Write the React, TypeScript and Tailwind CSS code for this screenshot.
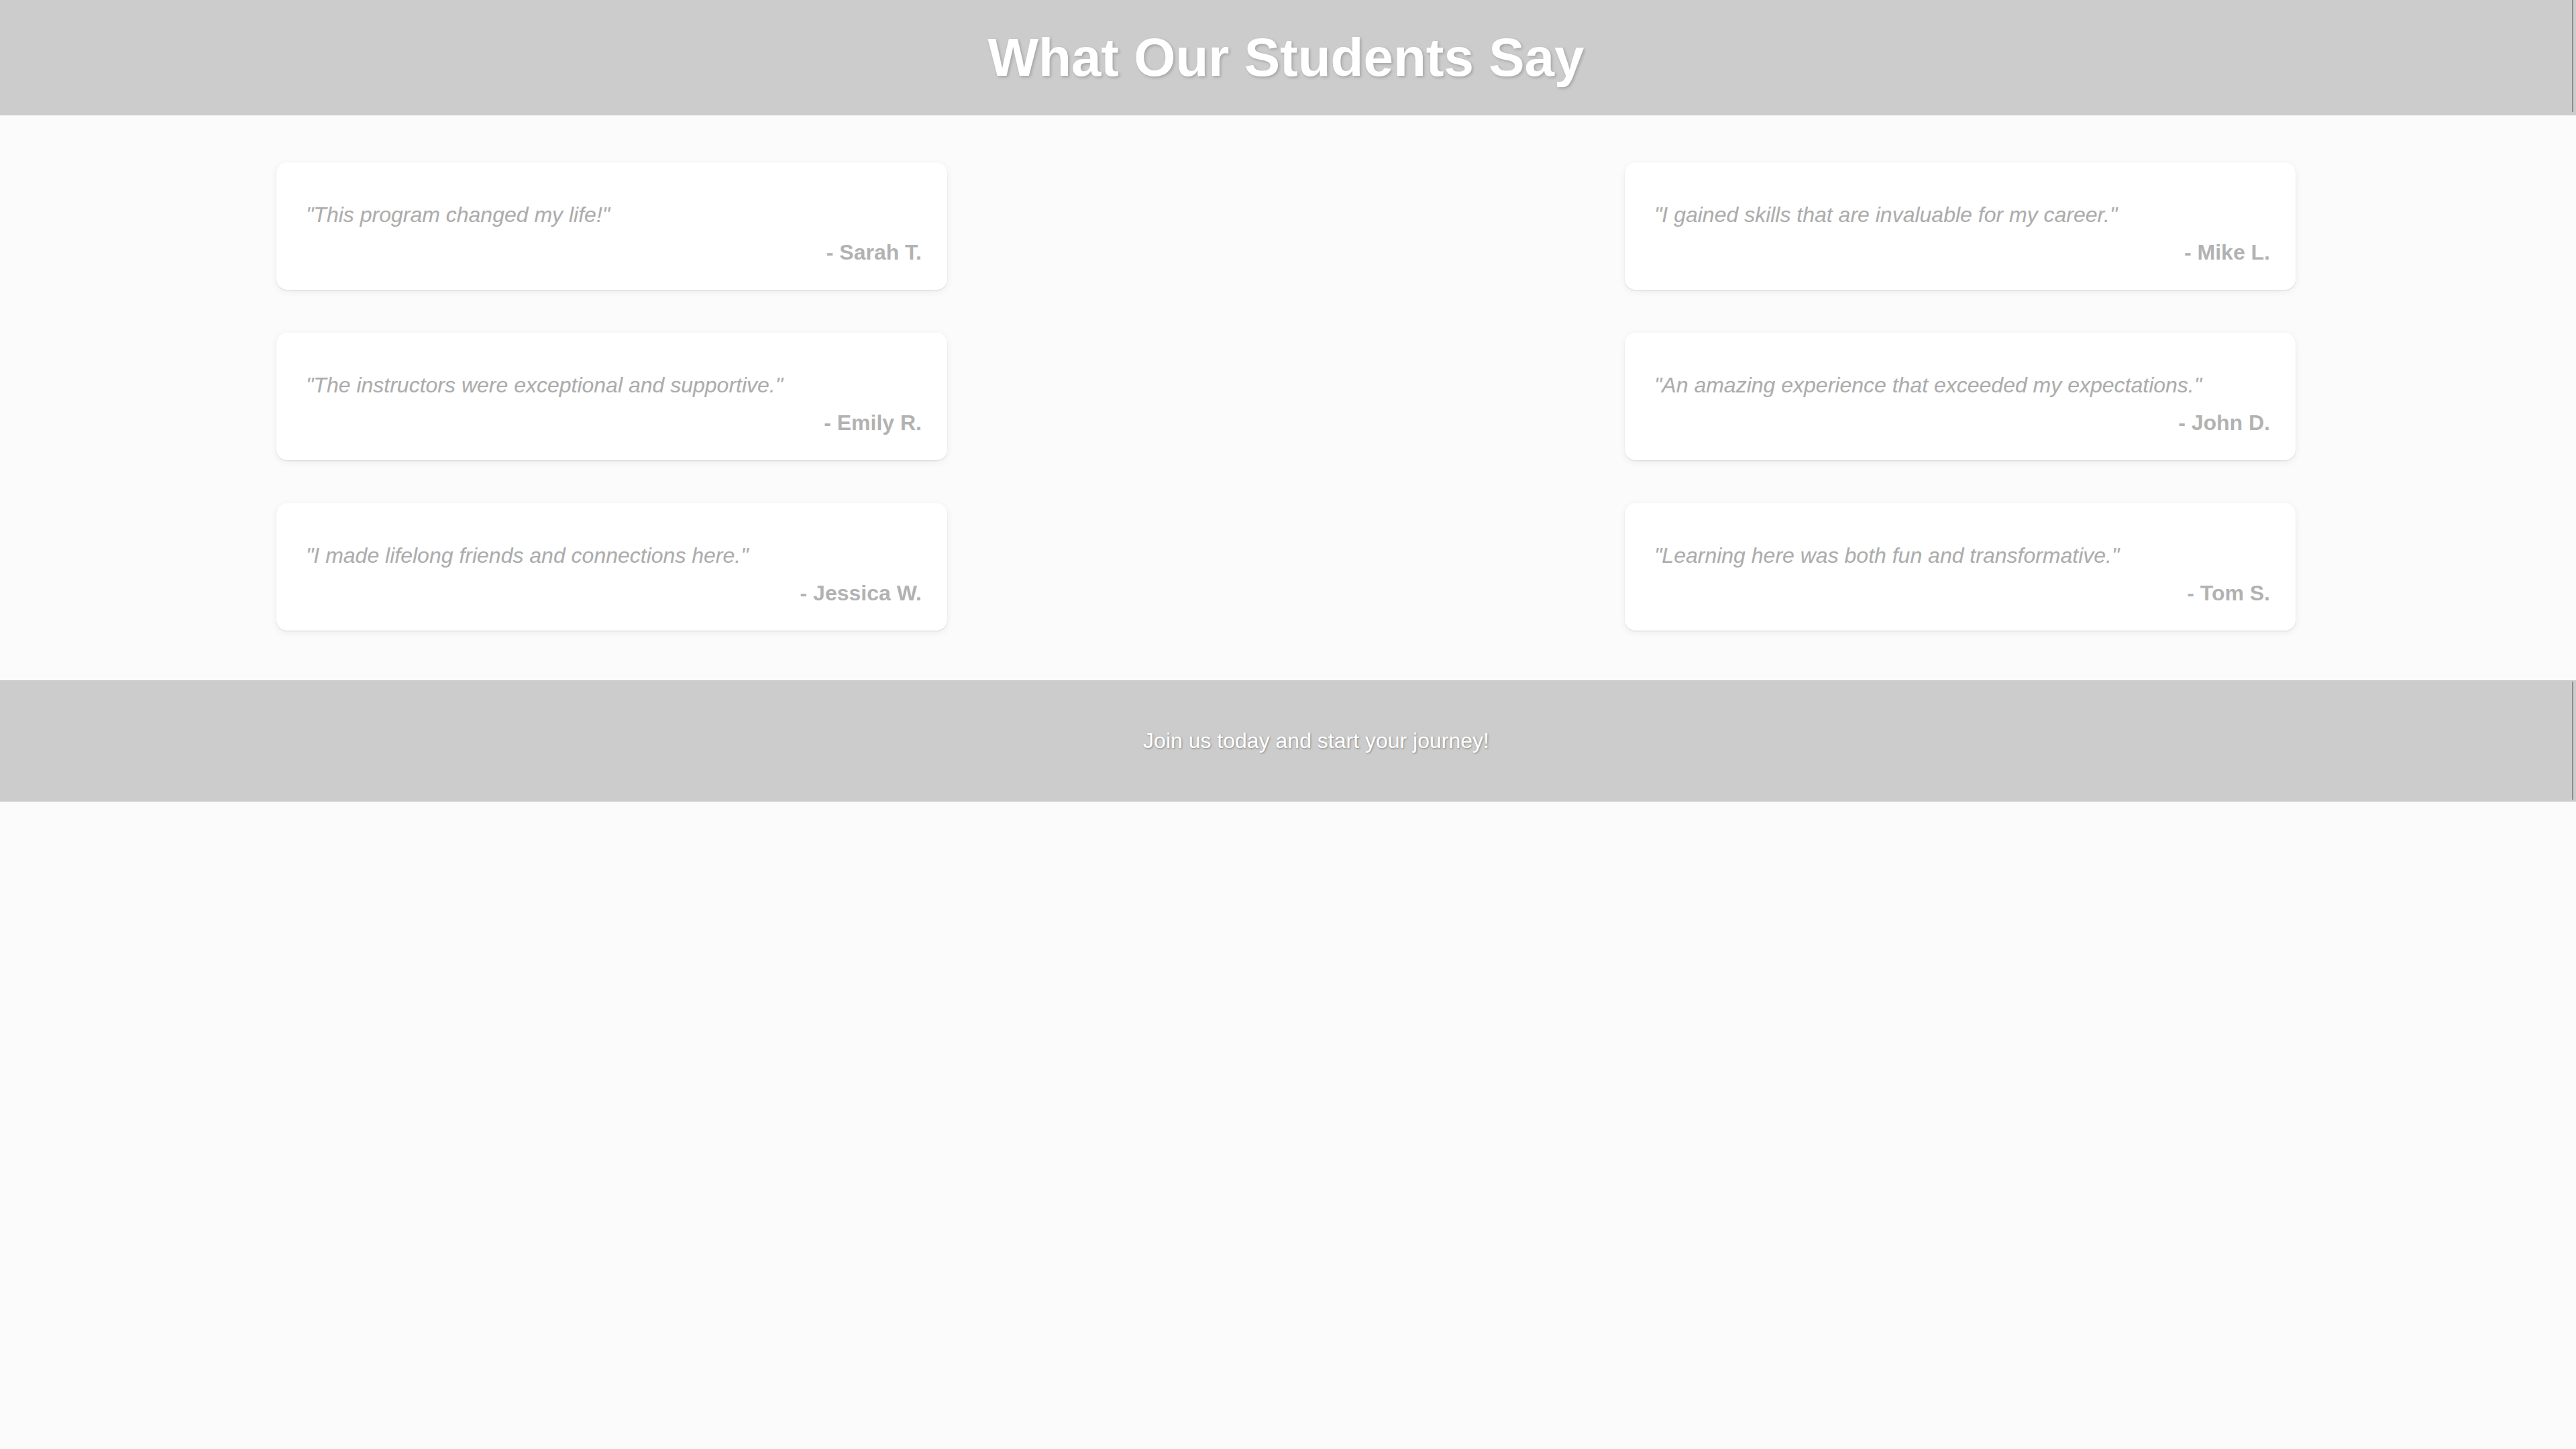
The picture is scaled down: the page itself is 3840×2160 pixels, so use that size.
const testimonials = [
  [
    { quote: "This program changed my life!", name: "Sarah T." },
    { quote: "The instructors were exceptional and supportive.", name: "Emily R." },
    { quote: "I made lifelong friends and connections here.", name: "Jessica W." },
  ],
  [
    { quote: "I gained skills that are invaluable for my career.", name: "Mike L." },
    { quote: "An amazing experience that exceeded my expectations.", name: "John D." },
    { quote: "Learning here was both fun and transformative.", name: "Tom S." },
  ],
];

function Card({ quote, name }: { quote: string; name: string }) {
  return (
    <div className="w-[1000px] h-[190px] bg-white rounded-[16px] shadow-[0_3px_12px_rgba(0,0,0,0.06),0_1px_2px_rgba(0,0,0,0.1)] pl-[44px] pr-[38px] pt-[60px] flex flex-col">
      <p className="italic text-[32px] leading-[36px] text-[#acacac] [text-shadow:0_-1px_2px_rgba(0,0,0,0.05)]">
        "{quote}"
      </p>
      <p className="mt-[20px] text-right font-bold text-[32px] leading-[36px] text-[#b2b2b2]">
        - {name}
      </p>
    </div>
  );
}

export default function App() {
  return (
    <div className="min-h-screen bg-[#fbfbfb] font-['Liberation_Sans',Arial,sans-serif]">
      {/* header */}
      <header className="relative h-[172px] bg-[#cccccc] flex items-center justify-center pr-[6px]">
        <h1 className="text-[80px] leading-[92px] font-bold text-white [text-shadow:2px_2px_4px_rgba(0,0,0,0.2)]">
          What Our Students Say
        </h1>
        <div className="absolute right-[4px] top-0 h-[167px] w-[2px] bg-[#8c8c8c]" />
      </header>

      {/* testimonials */}
      <section className="flex justify-between pl-[412px] pr-[418px] pt-[70px] pb-[74px]">
        {testimonials.map((col, i) => (
          <div key={i} className="flex flex-col gap-[64px]">
            {col.map((t) => (
              <Card key={t.name} quote={t.quote} name={t.name} />
            ))}
          </div>
        ))}
      </section>

      {/* footer */}
      <footer className="relative h-[181px] bg-[#cccccc] flex items-center justify-center pl-[84px]">
        <p className="text-[32px] leading-[37px] text-white [text-shadow:1px_1px_3px_rgba(0,0,0,0.35)]">
          Join us today and start your journey!
        </p>
        <div className="absolute right-[4px] top-[2px] h-[176px] w-[2px] bg-[#8c8c8c]" />
      </footer>
    </div>
  );
}
